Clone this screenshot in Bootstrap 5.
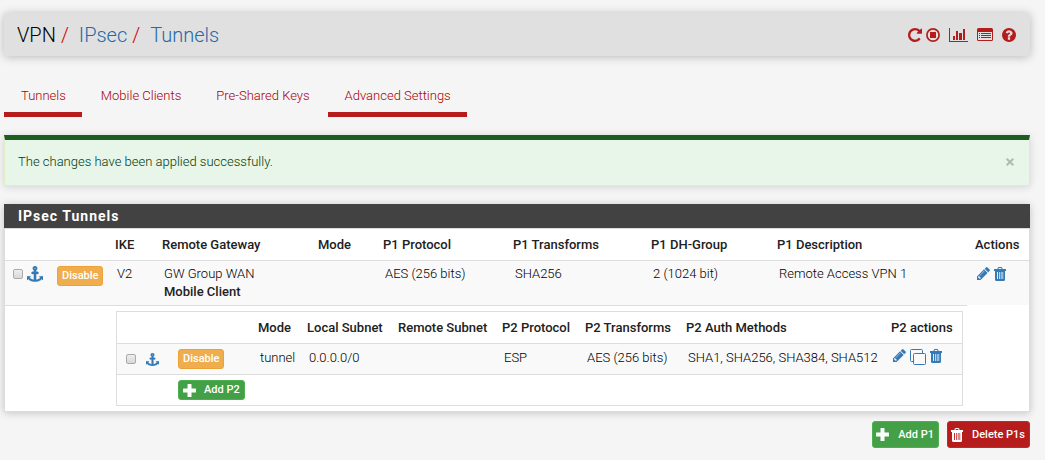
<!DOCTYPE html>
<html lang="en">
<head>
<meta charset="utf-8">
<meta name="viewport" content="width=device-width, initial-scale=1">
<title>VPN: IPsec: Tunnels</title>
<link href="https://cdn.jsdelivr.net/npm/bootstrap@5.3.0/dist/css/bootstrap.min.css" rel="stylesheet">
<style>
body{background:#f5f5f5;color:#000;font:300 13px/18px Roboto,"Liberation Sans",sans-serif}
.page{padding:13px 15px 12px 4px}
.page a{text-decoration:none}
.ico{display:block;fill:currentColor;width:14px;height:14px;flex:none}
.w12{width:12px}.w16{width:16px}.w19{width:19px}
.s8{width:8px;height:8px}.s13{width:13px;height:13px}.s16{width:16px;height:16px}
.topbar{background:#e0e0e0;border-radius:4px;box-shadow:0 1px 10px rgba(0,0,0,.25);height:43px;padding:0 14px 0 13px}
.topbar ol{font-size:20px;line-height:24px}
.topbar ol a{color:#2469a8}
.slash{color:#c00;padding:0 10px 0 5px}
.tools{gap:9px}
.tools a{color:#b71c1c}
.tabs{margin-top:18px;gap:2px}
.tabs .nav-link{color:#a80008;padding:13px 16px 7px 17px;border-bottom:5px solid transparent;border-radius:0}
.tabs .nav-link.active{border-color:#b71c1c}
.notice{background:#e8f5e9;color:#003c08;border:1px solid #dcedc8;border-top:5px solid #1b5e20;border-radius:0;margin:18px 0;padding:13px 15px 14px 13px;box-shadow:0 1px 8px rgba(0,0,0,.14)}
.notice p{line-height:18px}
.closer{border:0;background:none;padding:0;color:#333;opacity:.3}
.panel{background:#fff;border:1px solid #ddd;border-top:0;box-shadow:0 1px 8px rgba(0,0,0,.2)}
.panel h2{background:#424242;color:#fff;font-size:14px;font-weight:700;letter-spacing:1px;line-height:24px;margin:0 -1px;padding:0 14px}
.grid{width:100%;table-layout:fixed;border-collapse:separate;border-spacing:0;white-space:nowrap}
.grid th{color:#212121;font-weight:500;padding:7px 0 6px 8px;border-top:1px solid #ddd}
.grid td{border-top:1px solid #ddd;padding:4px 0 4px 10px;vertical-align:top}
.grid b{color:#212121;font-weight:500}
.grid .striped>td{background:#f9f9f9}
.p1row>td{height:45px}
.grid td.tight{padding:5px 0 0 8px}
.grid td.holder{padding:5px 4px 5px 9px}
.grid td.bare{border-top:0}
.inner{border:1px solid #ddd;border-top:0}
.inner tbody td{height:31px;padding-top:5px}
.grid .acts{padding-top:6px}
.inner tbody .acts{padding-top:5px}
.inner tbody .mid{padding:0 0 0 9px;vertical-align:middle}
.acts a,.mark-ike{color:#337ab7}
.c44{width:44px}.c58{width:58px}.c47{width:47px}.c156{width:156px}.c65{width:65px}.c130{width:130px}.c138{width:138px}.c126{width:126px}.c62{width:62px}
.d20{width:20px}.d31{width:31px}.d82{width:82px}.d49{width:49px}.d91{width:91px}.d104{width:104px}.d83{width:83px}.d101{width:101px}.d79{width:79px}
.tick{appearance:none;display:block;width:10px;height:10px;margin:0;flex:none;border:1px solid #aaa;border-radius:2px;background:linear-gradient(#eee,#d8d8d8)}
.tick:checked{background:#337ab7}
.mini{font-size:11px;font-weight:500;line-height:16px;padding:1px 4px;border-radius:3px;color:#fff;border:1px solid;gap:8px}
.mini:hover{color:#fff}
.amber{background:#f0ad4e;border-color:#eea236}
.green{background:#43a047;border-color:#4caf50}
.red{background:#b71c1c;border-color:#c62828}
.big{padding:4px 4px 4px 3px;line-height:17px;gap:9px}
.actions{margin-top:9px}
</style>
</head>
<body>
<svg class="d-none" aria-hidden="true">
<symbol id="i-repeat" viewBox="128 128 1536 1536"><path d="M1664 256v448q0 26-19 45t-45 19h-448q-42 0-59-40-17-39 14-69l138-138q-148-137-349-137-104 0-198.5 40.5t-163.5 109.5-109.5 163.5-40.5 198.5 40.5 198.5 109.5 163.5 163.5 109.5 198.5 40.5q119 0 225-52t179-147q7-10 23-12 15 0 25 9l137 138q9 8 9.5 20.5t-7.5 22.5q-109 132-264 204.5t-327 72.5q-156 0-298-61t-245-164-164-245-61-298 61-298 164-245 245-164 298-61q147 0 284.5 55.5t244.5 156.5l130-129q29-31 70-14 39 17 39 59z"/></symbol>
<symbol id="i-stop" viewBox="0 0 14 14"><circle cx="7" cy="7" r="6.1" fill="none" stroke="currentColor" stroke-width="1.7"/><rect x="4" y="4" width="6" height="6" rx=".3"/></symbol>
<symbol id="i-chart" viewBox="0 0 19 14"><path d="M0 0h1v13h18v1H0zM4 8h2v4H4zM7 3h2v9H7zM10 5h3v7h-3zM14 1h2v11h-2z"/></symbol>
<symbol id="i-list" viewBox="0 0 16 14"><path fill-rule="evenodd" d="M1.500 0h13Q16 0 16 1.500v10Q16 13 14.500 13h-13Q0 13 0 11.500v-10Q0 0 1.500 0zM1 4v7.500q0 .5.5.5h13q.5 0 .5-.5V4zM2 5h1v1H2zM4 5h10v1H4zM2 7h1v1H2zM4 7h10v1H4zM2 9h1v1H2zM4 9h10v1H4z"/></symbol>
<symbol id="i-help" viewBox="128 128 1536 1536"><path d="M1024 1376v-192q0-14-9-23t-23-9h-192q-14 0-23 9t-9 23v192q0 14 9 23t23 9h192q14 0 23-9t9-23zm256-672q0-88-55.500-163t-138.500-116-170-41q-243 0-371 213-15 24 8 42l132 100q7 6 19 6 16 0 25-12 53-68 86-92 34-24 86-24 48 0 85.500 26t37.500 59q0 38-20 61t-68 45q-63 28-115.500 86.500t-52.500 125.500v36q0 14 9 23t23 9h192q14 0 23-9t9-23q0-19 21.500-49.500t54.500-49.500q32-18 49-28.500t46-35 44.500-48 28-60.500 12.500-81zm384 192q0 209-103 385.500t-279.500 279.500-385.500 103-385.500-103-279.500-279.500-103-385.500 103-385.500 279.500-279.500 385.500-103 385.500 103 279.500 279.500 103 385.500z"/></symbol>
<symbol id="i-pencil" viewBox="128 140 1530 1530"><path d="M491 1536l91-91-235-235-91 91v107h128v128h107zm523-928q0-22-22-22-10 0-17 7l-542 542q-7 7-7 17 0 22 22 22 10 0 17-7l542-542q7-7 7-17zm-54-192l416 416-832 832h-416v-416zm683 96q0 53-37 90l-166 166-416-416 166-165q36-38 90-38 53 0 91 38l235 234q37 39 37 91z"/></symbol>
<symbol id="i-trash" viewBox="0 0 12 14"><path fill-rule="evenodd" d="M3.500 2V1.500Q3.500 0 5 0h2q1.500 0 1.500 1.500V2H12v2h-1v8.500q0 1.500-1.500 1.500h-7Q1 14 1 12.500V4H0V2zM4.500 2h3v-.5Q7.500 1 7 1H5q-.5 0-.5.500zM3 5v7h.9V5zM5.100 5v7h.7V5zM6.800 5v7h.7V5zM8.500 5v7h.7V5z"/></symbol>
<symbol id="i-anchor" viewBox="0 0 1792 1792"><path stroke="currentColor" stroke-width="30" d="M960 256q0-26-19-45t-45-19-45 19-19 45 19 45 45 19 45-19 19-45zm832 928v352q0 22-20 30-8 2-12 2-12 0-23-9l-93-93q-119 143-318.500 226.500t-429.500 83.500-429.500-83.500-318.500-226.500l-93 93q-9 9-23 9-4 0-12-2-20-8-20-30v-352q0-14 9-23t23-9h352q22 0 30 20 8 19-7 35l-100 100q67 91 189.500 153.500t271.500 82.500v-647h-192q-26 0-45-19t-19-45v-128q0-26 19-45t45-19h192v-163q-58-34-93-92.500t-35-128.500q0-106 75-181t181-75 181 75 75 181q0 70-35 128.500t-93 92.500v163h192q26 0 45 19t19 45v128q0 26-19 45t-45 19h-192v647q149-20 271.500-82.500t189.500-153.500l-100-100q-15-16-7-35 8-20 30-20h352q14 0 23 9t9 23z"/></symbol>
<symbol id="i-clone" viewBox="0 0 16 16"><path fill="none" stroke="currentColor" d="M4.500 4.500h10q1 0 1 1v9q0 1-1 1h-10q-1 0-1-1v-9q0-1 1-1zM3.500 12.500h-2q-1 0-1-1v-10q0-1 1-1h10q1 0 1 1v3"/></symbol>
<symbol id="i-plus" viewBox="0 0 13 13"><path d="M5 0h3q.5 0 .5.5v4h4q.5 0 .5.5v3q0 .5-.5.500h-4v4q0 .5-.5.500H5q-.5 0-.5-.5v-4h-4Q0 8.500 0 8V5q0-.5.500-.5h4v-4Q4.500 0 5 0z"/></symbol>
<symbol id="i-close" viewBox="0 0 8 8"><path stroke="currentColor" stroke-width="2" d="M.7.7l6.600 6.600M7.300.7L.7 7.300"/></symbol>
</svg>
<div class="container-fluid page">
<header class="topbar d-flex align-items-center justify-content-between">
<ol class="list-unstyled d-flex m-0">
<li>VPN<span class="slash">/</span></li><li><a href="#">IPsec</a><span class="slash">/</span></li><li><a href="#">Tunnels</a></li>
</ol>
<div class="tools d-flex align-items-center">
<div class="d-flex gap-1">
<a href="#" aria-label="Restart service"><svg class="ico"><use href="#i-repeat"/></svg></a>
<a href="#" aria-label="Stop service"><svg class="ico"><use href="#i-stop"/></svg></a>
</div>
<a href="#" aria-label="Status"><svg class="ico w19"><use href="#i-chart"/></svg></a>
<a href="#" aria-label="Logs"><svg class="ico w16"><use href="#i-list"/></svg></a>
<a href="#" aria-label="Help"><svg class="ico"><use href="#i-help"/></svg></a>
</div>
</header>
<nav class="nav tabs">
<a class="nav-link active" href="#">Tunnels</a><a class="nav-link" href="#">Mobile Clients</a><a class="nav-link" href="#">Pre-Shared Keys</a><a class="nav-link active" href="#">Advanced Settings</a>
</nav>
<div class="notice alert d-flex align-items-center justify-content-between" role="alert">
<p class="m-0">The changes have been applied successfully.</p>
<button type="button" class="closer" data-bs-dismiss="alert" aria-label="Close"><svg class="ico s8"><use href="#i-close"/></svg></button>
</div>
<section class="panel">
<h2>IPsec Tunnels</h2>
<table class="grid">
<colgroup><col class="c44"><col class="c58"><col class="c47"><col class="c156"><col class="c65"><col class="c130"><col class="c138"><col class="c126"><col><col class="c62"></colgroup>
<thead><tr><th></th><th></th><th>IKE</th><th>Remote Gateway</th><th>Mode</th><th>P1 Protocol</th><th>P1 Transforms</th><th>P1 DH-Group</th><th>P1 Description</th><th>Actions</th></tr></thead>
<tbody>
<tr class="striped p1row">
<td class="tight"><div class="d-flex align-items-center gap-1"><input class="tick" type="checkbox" aria-label="Select P1 entry"><svg class="ico s16 mark-ike"><use href="#i-anchor"/></svg></div></td>
<td class="tight"><button type="button" class="btn mini amber">Disable</button></td>
<td>V2</td><td>GW Group WAN<br><b>Mobile Client</b></td><td></td><td>AES (256 bits)</td><td>SHA256</td><td>2 (1024 bit)</td><td>Remote Access VPN 1</td>
<td class="acts"><div class="d-flex gap-1"><a href="#" aria-label="Edit P1"><svg class="ico s13"><use href="#i-pencil"/></svg></a><a href="#" aria-label="Delete P1"><svg class="ico w12"><use href="#i-trash"/></svg></a></div></td>
</tr>
<tr>
<td colspan="2"></td>
<td colspan="7" class="holder">
<table class="grid inner">
<colgroup><col class="d20"><col class="d31"><col class="d82"><col class="d49"><col class="d91"><col class="d104"><col class="d83"><col class="d101"><col><col class="d79"></colgroup>
<thead><tr><th></th><th></th><th></th><th>Mode</th><th>Local Subnet</th><th>Remote Subnet</th><th>P2 Protocol</th><th>P2 Transforms</th><th>P2 Auth Methods</th><th>P2 actions</th></tr></thead>
<tbody>
<tr class="striped">
<td class="mid"><input class="tick" type="checkbox" aria-label="Select P2 entry"></td>
<td class="mid"><svg class="ico s13 mark-ike"><use href="#i-anchor"/></svg></td>
<td><button type="button" class="btn mini amber">Disable</button></td>
<td>tunnel</td><td>0.0.0.0/0</td><td></td><td>ESP</td><td>AES (256 bits)</td><td>SHA1, SHA256, SHA384, SHA512</td>
<td class="acts"><div class="d-flex gap-1"><a href="#" aria-label="Edit P2"><svg class="ico s13"><use href="#i-pencil"/></svg></a><a href="#" aria-label="Copy P2"><svg class="ico s16"><use href="#i-clone"/></svg></a><a href="#" aria-label="Delete P2"><svg class="ico w12"><use href="#i-trash"/></svg></a></div></td>
</tr>
<tr><td colspan="2"></td><td colspan="8"><button type="button" class="btn mini green d-flex align-items-center"><svg class="ico s13"><use href="#i-plus"/></svg>Add P2</button></td></tr>
</tbody>
</table>
</td>
<td class="bare"></td>
</tr>
</tbody>
</table>
</section>
<div class="d-flex justify-content-end gap-2 actions">
<button type="button" class="btn mini green big d-flex align-items-center"><svg class="ico s13"><use href="#i-plus"/></svg>Add P1</button>
<button type="button" class="btn mini red big d-flex align-items-center"><svg class="ico w12"><use href="#i-trash"/></svg>Delete P1s</button>
</div>
</div>
<script src="https://cdn.jsdelivr.net/npm/bootstrap@5.3.0/dist/js/bootstrap.bundle.min.js"></script>
</body>
</html>
